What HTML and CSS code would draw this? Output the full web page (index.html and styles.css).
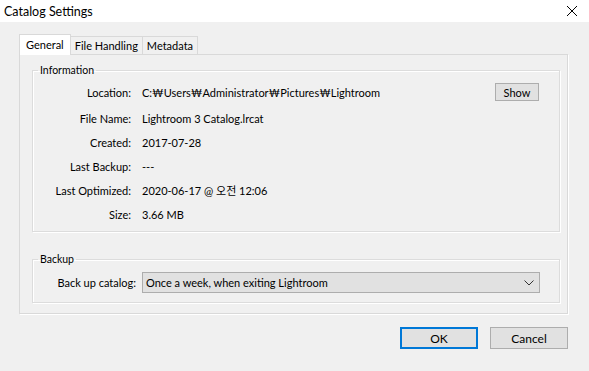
FILE: index.html
```html
<!DOCTYPE html>
<html lang="en">

<head>
    <meta charset="UTF-8">
    <meta name="viewport" content="width=device-width, initial-scale=1.0">
    <title>Catalog Settings</title>
    <link rel="stylesheet" href="styles.css">
</head>

<body>

    <div class="titlebar">
        <span class="title">Catalog Settings</span>
        <svg class="close" width="12" height="12" viewBox="0 0 12 12">
            <path d="M1 1 L11 11 M11 1 L1 11" stroke="#000" stroke-width="1" fill="none" />
        </svg>
    </div>

    <div class="dialog">
        <div class="tabs">
            <div class="tab active">General</div>
            <div class="tab">File Handling</div>
            <div class="tab">Metadata</div>
        </div>

        <div class="panel">
            <fieldset class="group info">
                <legend>Information</legend>
                <div class="rows">
                    <div class="label">Location:</div>
                    <div class="value">C:₩Users₩Administrator₩Pictures₩Lightroom</div>
                    <div class="extra"><button class="small-btn">Show</button></div>

                    <div class="label">File Name:</div>
                    <div class="value">Lightroom 3 Catalog.lrcat</div>
                    <div class="extra"></div>

                    <div class="label">Created:</div>
                    <div class="value">2017-07-28</div>
                    <div class="extra"></div>

                    <div class="label">Last Backup:</div>
                    <div class="value">---</div>
                    <div class="extra"></div>

                    <div class="label">Last Optimized:</div>
                    <div class="value">2020-06-17 @ 오전 12:06</div>
                    <div class="extra"></div>

                    <div class="label">Size:</div>
                    <div class="value">3.66 MB</div>
                    <div class="extra"></div>
                </div>
            </fieldset>

            <fieldset class="group backup">
                <legend>Backup</legend>
                <div class="backup-row">
                    <div class="label">Back up catalog:</div>
                    <div class="select">
                        <span>Once a week, when exiting Lightroom</span>
                        <svg width="10" height="6" viewBox="0 0 10 6">
                            <path d="M0.5 0.5 L5 5 L9.5 0.5" stroke="#333" stroke-width="1" fill="none" />
                        </svg>
                    </div>
                </div>
            </fieldset>
        </div>

        <div class="actions">
            <button class="btn default">OK</button>
            <button class="btn">Cancel</button>
        </div>
    </div>

</body>

</html>
```

FILE: styles.css
```css
body {
    margin: 0;
    background: #f0f0f0;
    font-family: Lato, "Noto Sans CJK KR", sans-serif;
    font-size: 11px;
    line-height: 15px;
    color: #000;
}

.titlebar {
    height: 22px;
    background: #fff;
    display: flex;
    align-items: center;
    justify-content: space-between;
    padding: 0 11px 0 4px;
}

.title {
    font-size: 12.5px;
}

.dialog {
    padding: 12px 21px 0 19px;
}

.tabs {
    display: flex;
    align-items: flex-end;
    height: 20px;
    position: relative;
    z-index: 1;
}

.tab {
    height: 18px;
    line-height: 17px;
    padding: 0 4px;
    border: 1px solid #d9d9d9;
    border-bottom: none;
    margin-left: -1px;
    box-sizing: border-box;
}

.tab:first-child {
    margin-left: 0;
}

.tab.active {
    height: 21px;
    line-height: 20px;
    padding: 0 6px;
    background: #fff;
    margin-bottom: -1px;
}

.panel {
    border: 1px solid #d9d9d9;
    box-shadow: 1px 1px 0 #fff;
    padding: 8px 7px 10px 12px;
}

.group {
    margin: 0;
    border: 1px solid #dcdcdc;
    box-shadow: inset 1px 1px 0 #fff, 1px 1px 0 #fff;
    padding: 0 20px 5px 0;
}

.group legend {
    font-size: 10.5px;
    padding: 0 2px;
    margin-left: 5px;
}

.rows {
    display: grid;
    grid-template-columns: 98px 1fr auto;
    grid-template-rows: 28px repeat(5, 24px);
    column-gap: 11px;
    align-items: center;
}

.label {
    text-align: right;
}

.small-btn {
    font-family: inherit;
    font-size: 11px;
    width: 44px;
    height: 18px;
    padding: 0;
    background: #e1e1e1;
    border: 1px solid #adadad;
}

.backup {
    margin-top: 20px;
    padding: 5px 19px 9px 0;
}

.backup-row {
    display: grid;
    grid-template-columns: 103px 1fr;
    column-gap: 6px;
    align-items: center;
}

.select {
    height: 21px;
    box-sizing: border-box;
    border: 1px solid #adadad;
    background: #e1e1e1;
    display: flex;
    align-items: center;
    justify-content: space-between;
    padding: 0 5px 0 3px;
}

.actions {
    display: flex;
    justify-content: flex-end;
    gap: 12px;
    margin-top: 13px;
}

.btn {
    font-family: inherit;
    font-size: 12px;
    width: 78px;
    height: 22px;
    padding: 0;
    background: #e1e1e1;
    border: 1px solid #adadad;
}

.btn.default {
    border: 2px solid #0078d7;
}
```
